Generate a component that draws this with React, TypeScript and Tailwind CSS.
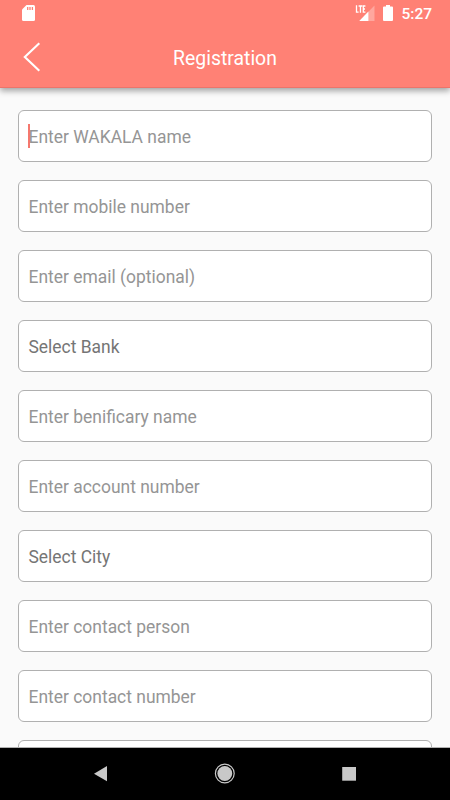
const fields = [
  { label: "Enter WAKALA name", active: true },
  { label: "Enter mobile number" },
  { label: "Enter email (optional)" },
  { label: "Select Bank", select: true },
  { label: "Enter benificary name" },
  { label: "Enter account number" },
  { label: "Select City", select: true },
  { label: "Enter contact person" },
  { label: "Enter contact number" },
  { label: "" },
];

function StatusBar() {
  return (
    <div className="flex h-[27px] items-start pl-[22px] pr-[18px] pt-[5px]">
      <svg width="13" height="16" viewBox="0 0 13 16" fill="none">
        <path d="M4.5 0H11.5Q13 0 13 1.5V14.5Q13 16 11.5 16H1.5Q0 16 0 14.5V4.5Z" fill="white" />
        <path d="M5.7 2V5M8 2V5M10.4 2V5" stroke="#ff8175" strokeWidth="1.3" />
      </svg>
      <div className="ml-auto flex items-start">
        <svg width="20" height="16" viewBox="0 0 20 16" fill="none">
          <path d="M19.5 .5V16H4.3Z" fill="white" fillOpacity=".3" />
          <path d="M13.4 6.5V16H4.3Z" fill="white" />
          <path d="M1.5 .3V7.1H3.6M3.6 1H7.3M5.45 1V7.7M10.4 1H8.3V7.1H10.4M8.3 4H10" stroke="white" strokeWidth="1.3" />
        </svg>
        <svg className="ml-[8px]" width="10" height="16" viewBox="0 0 10 16">
          <path d="M3 0H7V1.4H9Q10 1.4 10 2.6V15Q10 16 9 16H1Q0 16 0 15V2.6Q0 1.4 1 1.4H3Z" fill="white" />
        </svg>
        <span className="ml-[8.5px] text-[15.5px] font-medium leading-[18px]">5:27</span>
      </div>
    </div>
  );
}

export default function App() {
  return (
    <div className="flex h-[800px] w-[450px] flex-col overflow-hidden bg-[#fafafa] font-['Roboto',sans-serif]">
      <header className="relative z-10 h-[88px] shrink-0 border-b border-[#ec746a] bg-[#ff8175] text-white shadow-[0_3px_6px_rgba(0,0,0,0.35)]">
        <StatusBar />
        <div className="grid h-[60px] grid-cols-[60px_1fr_60px] items-center">
          <svg className="ml-[23px]" width="18" height="30" viewBox="0 0 18 30" fill="none">
            <path d="M16.3 1.3L1.8 15L16.3 28.7" stroke="white" strokeWidth="2.1" />
          </svg>
          <h1 className="pt-[3px] text-center text-[19.4px] leading-6">Registration</h1>
        </div>
      </header>
      <main className="flex min-h-0 flex-1 flex-col gap-[18px] overflow-hidden pl-[17.5px] pr-[18px] pt-[22px]">
        {fields.map((field, i) => (
          <div
            key={i}
            className="flex h-[52px] shrink-0 items-center rounded-[6px] border border-[#b0b0b0] bg-white pl-[10px] pt-[2px]"
          >
            <div className="relative text-[17.45px] leading-6">
              {field.active && <span className="absolute -left-[0.5px] -top-px z-10 h-6 w-[2px] bg-[#f5786e]" />}
              <span className={field.select ? "text-[#757575]" : "text-[#959595]"}>{field.label}</span>
            </div>
          </div>
        ))}
      </main>
      <nav className="flex h-[53px] shrink-0 items-center border-t border-[#b0b0b0] bg-black">
        <svg width="450" height="52" viewBox="0 0 450 52" fill="#c8c8c8">
          <path d="M94 25.7L107 18V33.3Z" />
          <circle cx="224.8" cy="25.5" r="7.4" />
          <circle cx="224.8" cy="25.5" r="9.4" fill="none" stroke="#c8c8c8" strokeWidth="1.2" />
          <path d="M342.2 19H356V32.7H342.2Z" />
        </svg>
      </nav>
    </div>
  );
}
